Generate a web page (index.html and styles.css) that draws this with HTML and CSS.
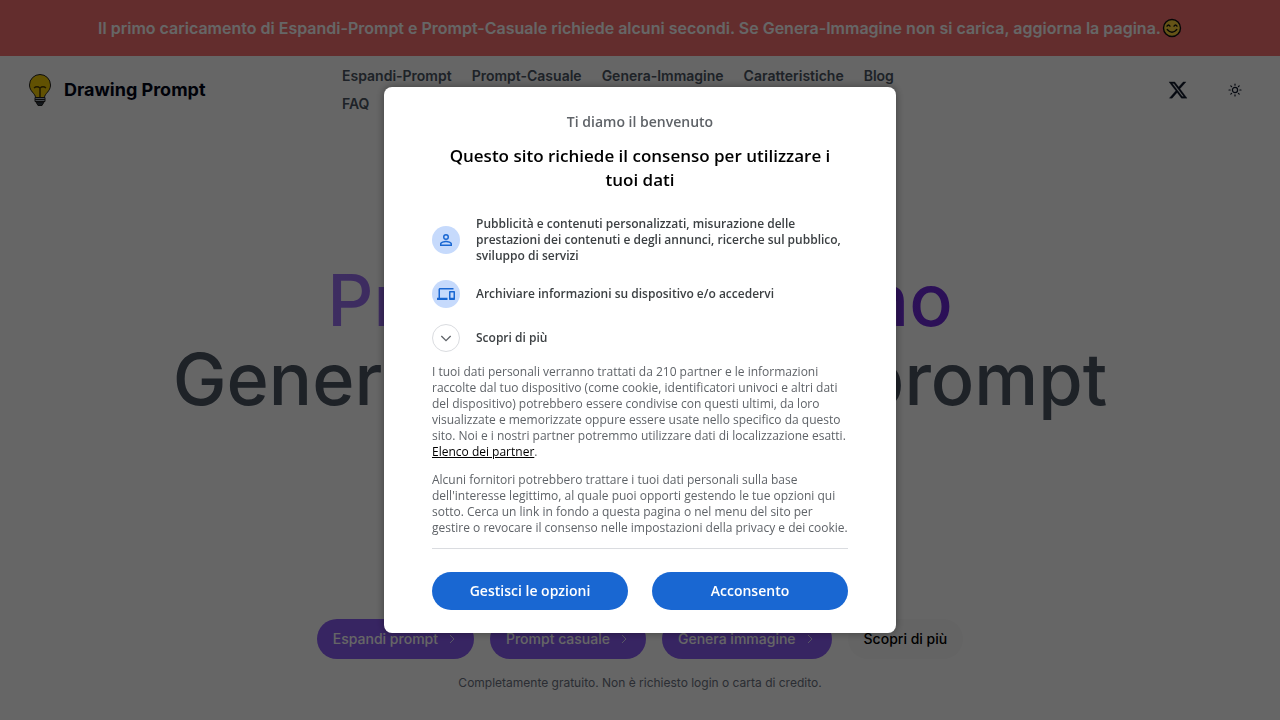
FILE: index.html
```
<!DOCTYPE html>
<html lang="it">
<head>
  <meta charset="UTF-8">
  <meta name="viewport" content="width=device-width, initial-scale=1">
  <title>Drawing Prompt</title>
  <link rel="stylesheet" href="styles.css">
</head>
<body>
<div class="page">
  <div class="notice">
    <span>Il primo caricamento di Espandi-Prompt e Prompt-Casuale richiede alcuni secondi. Se Genera-Immagine non si carica, aggiorna la pagina.</span>
    <svg class="smile" viewBox="0 0 20 20" aria-hidden="true">
      <circle cx="10" cy="10" r="8.5" fill="#fcd33b" stroke="#111" stroke-width="1.4"/>
      <path d="M5 8.2q1.5-2.4 3 0M12 8.2q1.5-2.4 3 0M5.2 11.5q4.800 5.500 9.600 0" fill="none" stroke="#111" stroke-width="1.3" stroke-linecap="round"/>
    </svg>
  </div>
  <header class="header">
    <a class="brand" href="#">
      <svg class="bulb" viewBox="0 0 32 32" aria-hidden="true">
        <path d="M11.500 23.500c0-4-6-6-6-12.500a10.500 10.500 0 0 1 21 0c0 6.500-6 8.500-6 12.500z" fill="#f2cb05" stroke="#222" stroke-width="1"/>
        <path d="M16 23V13.500M16 14q-3-2.500-6 0M16 14q3-2.500 6 0" fill="none" stroke="#4d3d00" stroke-width="1.500"/>
        <path d="M11 23.500h10v4H11z" fill="#aab4be" stroke="#222"/>
        <path d="M11 25.500h10" stroke="#222"/>
        <path d="M12 28h8l-2 3.500h-4z" fill="#333c48" stroke="#222"/>
      </svg>
      <span>Drawing Prompt</span>
    </a>
    <nav class="nav">
      <a href="#">Espandi-Prompt</a>
      <a href="#">Prompt-Casuale</a>
      <a href="#">Genera-Immagine</a>
      <a href="#">Caratteristiche</a>
      <a href="#">Blog</a>
      <a href="#">FAQ</a>
    </nav>
    <div class="tools">
      <a class="x-link" href="#" aria-label="X">
        <svg width="20" height="20" viewBox="0 0 24 24" fill="#0f172a" stroke="#0f172a" stroke-width=".4"><path d="M18.244 2.250h3.308l-7.227 8.260 8.502 11.240H16.170l-5.214-6.817L4.990 21.750H1.680l7.730-8.835L1.254 2.250H8.080l4.713 6.231zm-1.161 17.520h1.833L7.084 4.126H5.117z"/></svg>
      </a>
      <button class="theme" type="button" aria-label="Tema">
        <svg width="14" height="14" viewBox="0 0 14 14" fill="none" stroke="#0f172a" stroke-width="1.2" stroke-linecap="round"><circle cx="7" cy="7" r="2.600"/><path d="M7 1v1.200M7 11.800V13M1 7h1.200M11.800 7H13M2.800 2.800l.8.8M10.400 10.400l.8.8M11.200 2.800l-.8.8M3.600 10.400l-.8.8"/></svg>
      </button>
    </div>
  </header>
  <main class="hero">
    <h1 class="title"><span class="accent">Prompt di disegno</span><br>Generatore di validi prompt</h1>
    <div class="actions">
      <a class="pill" href="#">Espandi prompt <svg class="arrow" viewBox="0 0 12 12"><path d="M4 2l4 4-4 4"/></svg></a>
      <a class="pill" href="#">Prompt casuale <svg class="arrow" viewBox="0 0 12 12"><path d="M4 2l4 4-4 4"/></svg></a>
      <a class="pill" href="#">Genera immagine <svg class="arrow" viewBox="0 0 12 12"><path d="M4 2l4 4-4 4"/></svg></a>
      <a class="pill plain" href="#">Scopri di più</a>
    </div>
    <p class="free">Completamente gratuito. Non è richiesto login o carta di credito.</p>
  </main>
</div>

<div class="overlay">
  <div class="dialog" role="dialog" aria-modal="true" aria-labelledby="consent-title">
    <p class="welcome">Ti diamo il benvenuto</p>
    <h2 class="consent-title" id="consent-title">Questo sito richiede il consenso per utilizzare i tuoi dati</h2>
    <ul class="purposes">
      <li>
        <span class="badge"><svg viewBox="0 0 24 24"><path d="M12 5.900a2.100 2.100 0 1 1 0 4.200 2.100 2.100 0 0 1 0-4.200m0 9c2.970 0 6.100 1.460 6.100 2.100v1.100H5.900V17c0-.64 3.130-2.100 6.100-2.100M12 4a4 4 0 1 0 0 8 4 4 0 0 0 0-8zm0 9c-2.670 0-8 1.340-8 4v3h16v-3c0-2.660-5.330-4-8-4z"/></svg></span>
        <span>Pubblicità e contenuti personalizzati, misurazione delle prestazioni dei contenuti e degli annunci, ricerche sul pubblico, sviluppo di servizi</span>
      </li>
      <li>
        <span class="badge"><svg viewBox="0 0 24 24"><path d="M4 6h18V4H4c-1.100 0-2 .9-2 2v11H0v3h14v-3H4V6zm19 2h-6c-.55 0-1 .45-1 1v10c0 .55.450 1 1 1h6c.55 0 1-.45 1-1V9c0-.55-.45-1-1-1zm-1 9h-4v-7h4v7z"/></svg></span>
        <span>Archiviare informazioni su dispositivo e/o accedervi</span>
      </li>
      <li>
        <button class="badge more" type="button" id="more" aria-label="Scopri di più"><svg viewBox="0 0 24 24"><path d="M5 9l7 7 7-7"/></svg></button>
        <label for="more">Scopri di più</label>
      </li>
    </ul>
    <div class="details">
      <p>I tuoi dati personali verranno trattati da 210 partner e le informazioni raccolte dal tuo dispositivo (come cookie, identificatori univoci e altri dati del dispositivo) potrebbero essere condivise con questi ultimi, da loro visualizzate e memorizzate oppure essere usate nello specifico da questo sito. Noi e i nostri partner potremmo utilizzare dati di localizzazione esatti. <a href="#">Elenco dei partner</a>.</p>
      <p>Alcuni fornitori potrebbero trattare i tuoi dati personali sulla base dell'interesse legittimo, al quale puoi opporti gestendo le tue opzioni qui sotto. Cerca un link in fondo a questa pagina o nel menu del sito per gestire o revocare il consenso nelle impostazioni della privacy e dei cookie.</p>
    </div>
    <div class="choices">
      <button type="button">Gestisci le opzioni</button>
      <button type="button">Acconsento</button>
    </div>
  </div>
</div>
</body>
</html>
```
FILE: styles.css
```
* {
  margin: 0;
  padding: 0;
  box-sizing: border-box;
}

body {
  font-family: Inter, "Liberation Sans", sans-serif;
  color: #020617;
  background-color: #fff;
}

a {
  color: inherit;
  text-decoration: none;
}

button {
  border: 0;
  background: none;
  font: inherit;
  cursor: pointer;
}

.page {
  display: flex;
  flex-direction: column;
  height: 100vh;
  overflow: hidden;
}

.notice {
  display: flex;
  align-items: center;
  justify-content: center;
  gap: 1px;
  padding: 16px;
  font-size: 16px;
  line-height: 24px;
  font-weight: 600;
  color: #fff;
  background-color: #f87171;
}

.smile {
  width: 20px;
  height: 20px;
}

.header {
  display: flex;
  align-items: center;
  justify-content: space-between;
  padding: 10px 24px;
}

.brand, .tools {
  display: flex;
  align-items: center;
  flex: 1;
}

.brand {
  gap: 8px;
  font-size: 18px;
  line-height: 28px;
  font-weight: 700;
}

.bulb {
  width: 32px;
  height: 32px;
}

.nav {
  display: flex;
  flex-wrap: wrap;
  gap: 8px 20px;
  width: 596px;
  font-size: 14px;
  line-height: 20px;
  font-weight: 600;
  color: #4b5563;
}

.tools {
  justify-content: flex-end;
  gap: 26px;
}

.x-link, .theme {
  display: flex;
}

.theme {
  padding: 14px;
}

.hero {
  display: flex;
  flex: 1;
  flex-direction: column;
  align-items: center;
  text-align: center;
}

.title {
  margin-top: 136px;
  font-size: 72px;
  line-height: 79px;
  font-weight: 500;
  color: #4b5563;
}

.accent {
  color: transparent;
  background-image: linear-gradient(to right, #9b72f2, #6d28d9);
  -webkit-background-clip: text;
  background-clip: text;
}

.actions {
  display: flex;
  gap: 16px;
  margin-top: 201px;
}

.pill {
  display: flex;
  align-items: center;
  gap: 8px;
  padding: 10px 16px;
  border-radius: 20px;
  font-size: 14px;
  line-height: 20px;
  font-weight: 500;
  color: #fff;
  background-color: #8b5cf6;
}

.plain {
  color: #000;
  background-color: #fafafa;
}

.arrow {
  width: 12px;
  height: 12px;
  fill: none;
  stroke: #ddd6fe;
}

.free {
  margin-top: 16px;
  font-size: 12px;
  line-height: 16px;
  color: #6b7280;
}

.overlay {
  position: fixed;
  inset: 0;
  display: flex;
  align-items: center;
  justify-content: center;
  background-color: rgba(0, 0, 0, .6);
}

.dialog {
  width: 40%;
  min-width: 512px;
  padding: 23px 48px;
  border-radius: 8px;
  font-family: "Open Sans", "Noto Sans", sans-serif;
  font-size: 12px;
  line-height: 16px;
  color: #5f6368;
  background-color: #fff;
  box-shadow: 0 0 8px rgba(0, 0, 0, .4);
}

.welcome {
  font-size: 14px;
  line-height: 24px;
  font-weight: 600;
  text-align: center;
}

.consent-title {
  margin-top: 10px;
  font-size: 17px;
  line-height: 24px;
  font-weight: 600;
  text-align: center;
  color: #000;
}

.purposes {
  display: flex;
  flex-direction: column;
  gap: 16px;
  margin-top: 24px;
  list-style: none;
  font-weight: 600;
  color: #3c4043;
}

.purposes li {
  display: flex;
  align-items: center;
  gap: 16px;
}

.badge {
  display: flex;
  flex: none;
  align-items: center;
  justify-content: center;
  width: 28px;
  height: 28px;
  border-radius: 50%;
  background-color: #c6dafc;
}

.badge svg {
  width: 18px;
  height: 18px;
  fill: #1967d2;
}

.more {
  border: 1px solid #dadce0;
  background-color: #fff;
}

.more svg {
  width: 16px;
  height: 16px;
  fill: none;
  stroke: #5f6368;
  stroke-width: 2;
}

.details {
  margin-top: 12px;
  padding-bottom: 12px;
  border-bottom: 1px solid #dadce0;
}

.details p + p {
  margin-top: 12px;
}

.details a {
  color: #000;
  text-decoration: underline;
}

.choices {
  display: flex;
  gap: 24px;
  margin-top: 23px;
}

.choices button {
  flex: 1;
  padding: 9px;
  border-radius: 19px;
  font-size: 14px;
  line-height: 20px;
  font-weight: 600;
  color: #fff;
  background-color: #1967d2;
}
```
